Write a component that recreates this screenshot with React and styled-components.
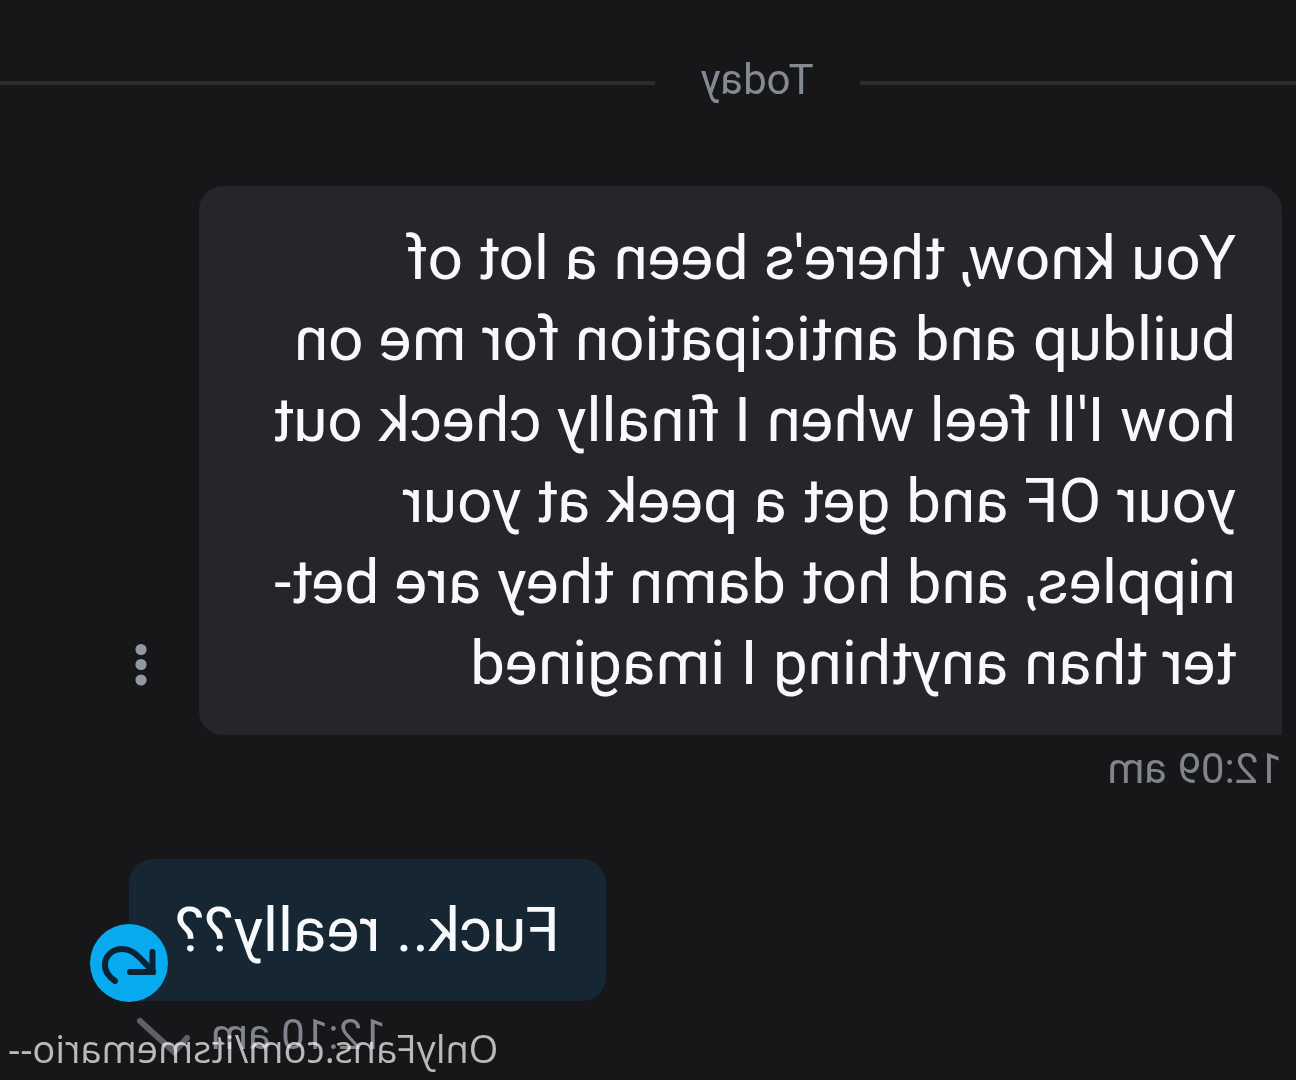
import React from 'react'
import styled, {createGlobalStyle} from 'styled-components'

const GlobalStyle = createGlobalStyle`
  body {
    margin: 0;
    background: #171719;
    font-family: Roboto, 'Liberation Sans', sans-serif;
  }
`

// the whole conversation is shown mirrored
const Page = styled.main`
  position: relative;
  box-sizing: border-box;
  min-height: 100vh;
  padding-top: 56px;
  overflow: hidden;
  transform: scaleX(-1);
`

const Divider = styled.div`
  display: flex;
  align-items: center;
  gap: 46px;
  margin-bottom: 76px;
`

const Line = styled.span`
  flex: ${({$grow}) => $grow} 1 0;
  height: 4px;
  background: #2c2c2f;
`

const DayLabel = styled.span`
  padding-bottom: 6px;
  font-size: 42px;
  line-height: 48px;
  color: #848a93;
`

const Message = styled.article`
  display: flex;
  flex-direction: column;
  align-items: ${({$own}) => ($own ? 'flex-end' : 'stretch')};
  padding: ${({$own}) => ($own ? '0 129px 0 14px' : '0 135px 0 14px')};

  & + & {
    margin-top: 66px;
  }
`

const BubbleRow = styled.div`
  position: relative;
  display: flex;
  align-items: flex-end;
  gap: 42px;
`

const Bubble = styled.p`
  flex: 1;
  margin: 0;
  padding: ${({$own}) => ($own ? '30px 46px 31px' : '31px 46px 32px')};
  border-radius: ${({$own}) => ($own ? '24px 24px 0 24px' : '24px 24px 24px 0')};
  background: ${({$own}) => ($own ? '#162733' : '#252629')};
  color: #f8f9fd;
  font-size: 62px;
  line-height: 81px;
`

const MenuButton = styled.button`
  display: flex;
  padding: 0 10px;
  margin: 0 -10px 48px 0;
  border: 0;
  background: none;
  color: #9298a2;
`

const ReplyBadge = styled.button`
  position: absolute;
  right: -39px;
  bottom: -1px;
  display: flex;
  padding: 0;
  border: 0;
  border-radius: 50%;
  background: #07aaee;
  color: #0b2233;
`

const Meta = styled.div`
  display: flex;
  align-items: center;
  gap: 20px;
  margin-top: 10px;
  margin-right: 7px;
  font-size: 42px;
  line-height: 48px;
  color: #7f848d;
`

const Watermark = styled.footer`
  position: absolute;
  right: 8px;
  bottom: 8px;
  font-family: 'Open Sans', 'Noto Sans', sans-serif;
  font-size: 38px;
  line-height: 48px;
  color: rgba(255, 255, 255, 0.7);
`

const DotsIcon = () => (
  <svg width="12" height="44" viewBox="0 0 12 44" fill="currentColor" aria-hidden="true">
    <circle cx="6" cy="6.500" r="5.6" />
    <circle cx="6" cy="21.500" r="5.6" />
    <circle cx="6" cy="37" r="5.6" />
  </svg>
)

const ReplyIcon = () => (
  <svg width="78" height="78" viewBox="0 0 78 78" fill="none" stroke="currentColor" strokeWidth="6" strokeLinecap="round" aria-hidden="true">
    <path d="M53 57C60 52 64 46 63 39C62 31 55 25 46 25C38 25 33 29 27 35L15 47.500" />
    <path d="M15.500 28V48H38" />
  </svg>
)

const CheckIcon = () => (
  <svg width="55" height="42" viewBox="0 0 55 42" fill="none" stroke="#5f6065" strokeWidth="6" strokeLinecap="round" aria-hidden="true">
    <path d="M4 24L17 38L51 7" />
  </svg>
)

const App = () => (
  <>
    <GlobalStyle />
    <Page>
      <Divider>
        <Line $grow={2} />
        <DayLabel>Today</DayLabel>
        <Line $grow={3} />
      </Divider>

      <Message>
        <BubbleRow>
          <Bubble>
            You know, there's been a lot of<br />
            buildup and anticipation for me on<br />
            how I'll feel when I finally check out<br />
            your OF and get a peek at your<br />
            nipples, and hot damn they are bet-<br />
            ter than anything I imagined
          </Bubble>
          <MenuButton aria-label="Message options"><DotsIcon /></MenuButton>
        </BubbleRow>
        <Meta><time>12:09 am</time></Meta>
      </Message>

      <Message $own>
        <BubbleRow>
          <Bubble $own>Fuck.. really??</Bubble>
          <ReplyBadge aria-label="Reply"><ReplyIcon /></ReplyBadge>
        </BubbleRow>
        <Meta>
          <time>12:10 am</time>
          <CheckIcon />
        </Meta>
      </Message>

      <Watermark>OnlyFans.com/itsmemario--</Watermark>
    </Page>
  </>
)

export default App
